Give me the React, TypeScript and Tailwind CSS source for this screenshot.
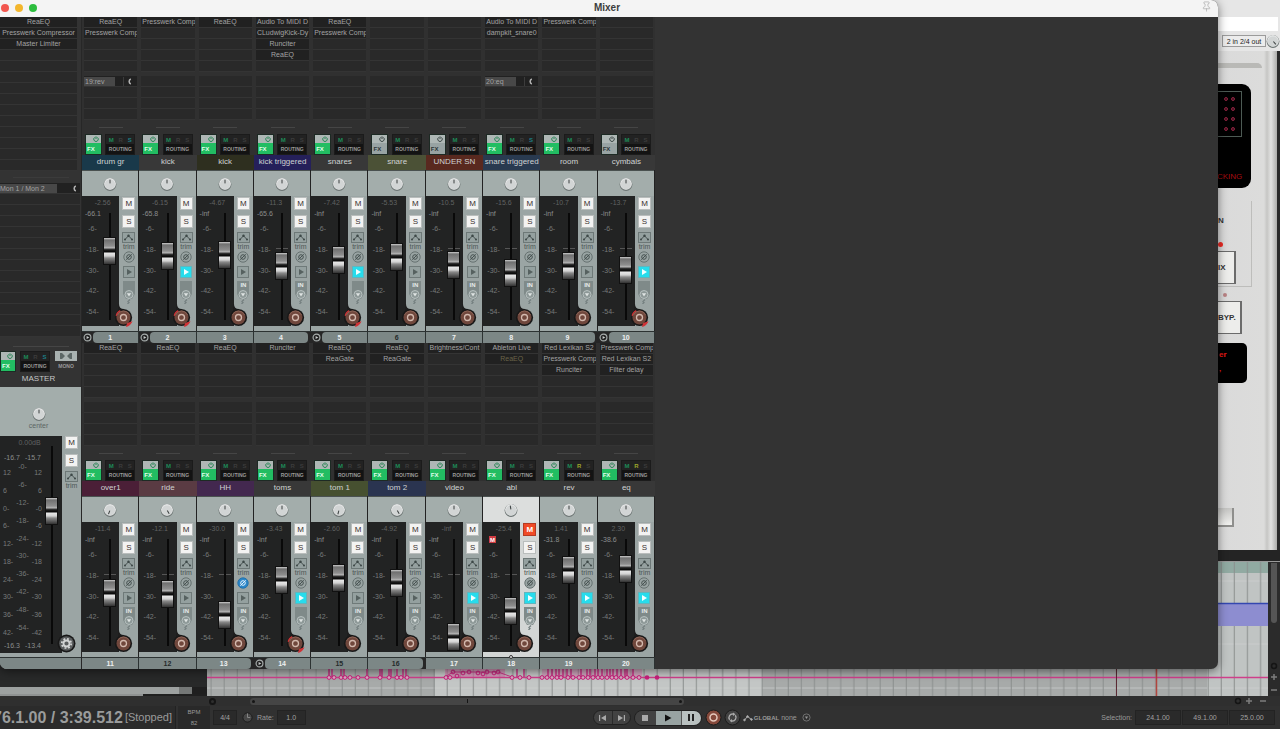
import React from "react";
import { Pin } from "lucide-react";

type Track = {
  n: number;
  name: string;
  tint: string;
  fx: string[];
  send?: string;
  vol: string;
  peak: string;
  fader: number;
  pan?: number;
  fxOff?: boolean;
  play?: boolean;
  armed?: boolean;
  phase?: boolean;
  soloLit?: boolean;
  recvLit?: boolean;
  folder?: boolean;
  folderEnd?: boolean;
  darkNum?: boolean;
  selected?: boolean;
};

const plain = "bg-[#383838]";

const topTracks: Track[] = [
  { n: 1, name: "drum gr", tint: "bg-[#19394a]", fx: ["ReaEQ", "Presswerk Comp"], send: "19:rev", vol: "-2.56", peak: "-66.1", fader: 61, armed: true, soloLit: true, folder: true },
  { n: 2, name: "kick", tint: plain, fx: ["Presswerk Comp"], vol: "-6.15", peak: "-65.8", fader: 56, play: true, armed: true, folder: true },
  { n: 3, name: "kick", tint: "bg-[#2e2f1f]", fx: ["ReaEQ"], vol: "-4.67", peak: "-inf", fader: 57 },
  { n: 4, name: "kick triggered", tint: "bg-[#25205a]", fx: ["Audio To MIDI D", "CLudwigKick-Dy", "Runciter", "ReaEQ"], vol: "-11.3", peak: "-65.6", fader: 46, folderEnd: true },
  { n: 5, name: "snares", tint: plain, fx: ["ReaEQ", "Presswerk Comp"], vol: "-7.42", peak: "-inf", fader: 52, play: true, armed: true, folder: true },
  { n: 6, name: "snare", tint: "bg-[#4b5136]", fx: [], vol: "-5.53", peak: "-inf", fader: 55, fxOff: true, darkNum: true },
  { n: 7, name: "UNDER SN", tint: "bg-[#59291f]", fx: [], vol: "-10.5", peak: "-inf", fader: 47, fxOff: true },
  { n: 8, name: "snare triggered", tint: "bg-[#293a50]", fx: ["Audio To MIDI D", "dampkit_snare0"], send: "20:eq", vol: "-15.6", peak: "-inf", fader: 39, soloLit: true },
  { n: 9, name: "room", tint: plain, fx: ["Presswerk Comp"], vol: "-10.7", peak: "-inf", fader: 46, folderEnd: true },
  { n: 10, name: "cymbals", tint: plain, fx: [], vol: "-13.7", peak: "-inf", fader: 42, fxOff: true, play: true, armed: true, folder: true },
];

const bottomTracks: Track[] = [
  { n: 11, name: "over1", tint: "bg-[#4b1f37]", fx: ["ReaEQ"], vol: "-11.4", peak: "-inf", fader: 45, pan: -160 },
  { n: 12, name: "ride", tint: "bg-[#5a3b43]", fx: ["ReaEQ"], vol: "-12.1", peak: "-inf", fader: 44, pan: 150, darkNum: true },
  { n: 13, name: "HH", tint: "bg-[#43284f]", fx: ["ReaEQ"], vol: "-30.0", peak: "-inf", fader: 23, phase: true, folderEnd: true },
  { n: 14, name: "toms", tint: plain, fx: ["Runciter"], vol: "-3.43", peak: "-inf", fader: 58, play: true, armed: true, folder: true },
  { n: 15, name: "tom 1", tint: "bg-[#465030]", fx: ["ReaEQ", "ReaGate"], vol: "-2.60", peak: "-inf", fader: 60, pan: -165, darkNum: true },
  { n: 16, name: "tom 2", tint: "bg-[#2a3450]", fx: ["ReaEQ", "ReaGate"], vol: "-4.92", peak: "-inf", fader: 55, pan: 150, darkNum: true, folderEnd: true },
  { n: 17, name: "video", tint: plain, fx: ["Brightness/Cont"], vol: "-inf", peak: "-inf", fader: 1, play: true },
  { n: 18, name: "abl", tint: plain, fx: ["Ableton Live", "ReaEQ"], vol: "-25.4", peak: "M", fader: 27, pan: -10, play: true, selected: true },
  { n: 19, name: "rev", tint: plain, fx: ["Red Lexikan S2", "Presswerk Comp", "Runciter"], vol: "1.41", peak: "-31.8", fader: 68, play: true, recvLit: true },
  { n: 20, name: "eq", tint: plain, fx: ["Presswerk Comp", "Red Lexikan S2", "Filter delay"], vol: "2.30", peak: "-38.6", fader: 69, play: true, recvLit: true },
];

function Knob({ angle = 0, label }: { angle?: number; label: string }) {
  return (
    <button aria-label={label} className="size-[14px] shrink-0">
      <svg viewBox="0 0 14 14" className="size-full">
        <circle cx="7" cy="7.5" r="6.4" fill="#6d7574" />
        <circle cx="7" cy="6.8" r="5.9" fill="#e4e6e6" />
        <circle cx="7" cy="7.4" r="5" fill="#d2d5d5" />
        <path d="M7 2.6V6.4" stroke="#3a3f3f" strokeWidth="1" transform={`rotate(${angle} 7 7)`} />
      </svg>
    </button>
  );
}

function Slot({ text, bypassed }: { text?: string; bypassed?: boolean }) {
  return (
    <div
      className={`flex h-[11px] items-center overflow-hidden whitespace-nowrap border-b border-[#343434] px-px text-[7px] leading-[10px] ${
        text ? "bg-[#212121]" : "bg-[#292929]"
      } ${bypassed ? "text-[#6a6349]" : "text-[#a3a3a3]"}`}
    >
      <span className="mx-auto">{text}</span>
    </div>
  );
}

function SendSlot({ text }: { text: string }) {
  return (
    <div className="flex h-[11px] items-center border-b border-[#343434] bg-[#212121] text-[7px] leading-[9px] text-[#a3a3a3]">
      <span className="h-[9px] w-[58%] whitespace-nowrap bg-[#484848] px-px">{text}</span>
      <span className="ml-2 h-[9px] w-px bg-[#3c3c3c]" />
      <svg viewBox="0 0 8 8" className="ml-auto mr-1 size-[7px]">
        <path d="M5.5 1.2A3 3 0 0 0 5.5 6.8" fill="none" stroke="#b4b4b4" strokeWidth="1.7" />
      </svg>
    </div>
  );
}

function FxButton({ off, clipped }: { off?: boolean; clipped?: boolean }) {
  return (
    <button className={`flex h-[21px] flex-col border border-[#1d2a24] ${clipped ? "w-4" : "w-[17px]"}`} aria-label="FX chain">
      <span className="flex h-2 w-full items-center justify-end bg-[#aeb7b5] pr-[2px]">
        <svg viewBox="0 0 8 8" className="size-[6px]" fill="none" stroke={off ? "#2f3b3a" : "#19804b"} strokeWidth="1.2">
          <path d="M2.3 1.8A3 3 0 1 0 5.7 1.8M4 .5V4" />
        </svg>
      </span>
      <span
        className={`flex w-full flex-1 items-center pl-px text-[6px] font-bold leading-none ${
          off ? "bg-[#98a3a3] text-[#2c3535]" : "bg-[#22bd62] text-[#e2ffee]"
        }`}
      >
        FX
      </span>
    </button>
  );
}

function RoutingButton({ soloLit, recvLit }: { soloLit?: boolean; recvLit?: boolean }) {
  return (
    <button className="flex h-[21px] w-[30px] flex-col border border-[#1b1b1b] bg-[#131313]">
      <span className="flex h-[9px] w-full items-center justify-around bg-[#222] text-[6px] font-bold leading-none">
        <span className="text-[#1d8a58]">M</span>
        <span className={recvLit ? "text-[#9ca62a]" : "text-[#3c3c3c]"}>R</span>
        <span className={soloLit ? "text-[#1d7f86]" : "text-[#3c3c3c]"}>S</span>
      </span>
      <span className="flex w-full flex-1 items-center justify-center text-[5px] font-bold leading-none text-[#9a9a9a]">ROUTING</span>
    </button>
  );
}

function Fader({ value, max, label, h }: { value: number; max: number; label: string; h: string }) {
  return (
    <input
      type="range"
      aria-label={label}
      min={0}
      max={max}
      defaultValue={value}
      className={`${h} w-[13px] appearance-none bg-[linear-gradient(90deg,transparent_6px,#090909_6px,#090909_8px,transparent_8px)] bg-no-repeat [direction:rtl] [writing-mode:vertical-lr] [&::-webkit-slider-thumb]:h-[28px] [&::-webkit-slider-thumb]:w-[13px] [&::-webkit-slider-thumb]:appearance-none [&::-webkit-slider-thumb]:border [&::-webkit-slider-thumb]:border-[#111] [&::-webkit-slider-thumb]:bg-[linear-gradient(180deg,#d0d0d0_0px,#707070_2px,#8e8e8e_8px,#b8b8b8_10px,#3a3a3a_11px,#0b0b0b_13px,#0b0b0b_14px,#e8e8e8_15px,#d2d2d2_18px,#8a8a8a_20px,#333_26px)]`}
    />
  );
}

function MiniButton({ children, lit }: { children: React.ReactNode; lit?: boolean }) {
  return (
    <button
      className={`flex size-[13px] shrink-0 items-center justify-center border text-[8px] leading-none ${
        lit ? "border-[#b53a22] bg-[#f04a26] font-bold text-white" : "border-[#b9bdbc] bg-[#f3f3f2] text-[#3a3030]"
      }`}
    >
      {children}
    </button>
  );
}

function EnvelopeButton() {
  return (
    <>
      <button aria-label="Envelopes" className="mt-1 h-[11px] w-[13px] shrink-0 border border-[#6d7877] bg-[#94a09f]">
        <svg viewBox="0 0 11 9" className="size-full" stroke="#3c4746" fill="#3c4746">
          <path d="M2 6.5 5.5 2.8 9 6.5" fill="none" strokeWidth=".9" />
          <circle cx="2" cy="6.5" r="1" stroke="none" />
          <circle cx="5.5" cy="2.8" r="1.2" stroke="none" />
          <circle cx="9" cy="6.5" r="1" stroke="none" />
        </svg>
      </button>
      <span className="h-2 text-[7px] leading-[7px] text-[#4c5756]">trim</span>
    </>
  );
}

function RecordButton({ armed }: { armed?: boolean }) {
  return (
    <button aria-label="Record arm" className="relative -ml-[5px] h-[23px] w-[20px] shrink-0 self-start">
      <svg viewBox="0 0 20 23" className="size-full">
        <path d="M4 0H5Q5 5 10 5L4 14Z" fill="#1e1e1e" />
        <circle cx="9.500" cy="13.500" r="8.600" fill="#181818" />
        {armed && <path d="M1.600 11.500A8 8 0 0 1 6 6L7 9 4 13ZM18.500 17.200A9.500 9.500 0 0 1 12 23L13 19Z" fill="#d03236" />}
        <circle cx="9.500" cy="13.500" r="7" fill="#70473c" />
        <path d="M3.500 11A6.500 6.500 0 0 1 15.500 11" fill="none" stroke="#8d6558" strokeWidth=".9" />
        <circle cx="9.500" cy="13.500" r="3" fill="none" stroke="#d3b9ae" strokeWidth="1.300" />
      </svg>
    </button>
  );
}

function NumberBar({ t }: { t: Track }) {
  return (
    <div className="flex h-3 border-t border-[#2c3232] bg-[#262626]">
      {t.folder && (
        <button aria-label="Collapse folder" className="flex w-[11px] shrink-0 items-center justify-center">
          <svg viewBox="0 0 10 10" className="size-[9px]">
            <circle cx="5" cy="5" r="3.800" fill="#222" stroke="#a7adac" strokeWidth="1.300" />
            <path d="M4 3.200 7 5 4 6.800Z" fill="#c9cdcc" />
          </svg>
        </button>
      )}
      <div
        className={`flex flex-1 items-center justify-center bg-[#7c8786] text-[7px] font-bold leading-none ${t.folder ? "rounded-l-[4px] pr-[11px]" : ""} ${
          t.folderEnd ? "mr-[3px] rounded-r-[4px]" : "border-r border-[#2c3232]"
        } ${t.darkNum ? "text-[#252b2b]" : "text-[#eef0f0]"}`}
      >
        {t.n}
      </div>
    </div>
  );
}

const marks = ["-6-", "-18-", "-30-", "-42-", "-54-"];

function Strip({ t }: { t: Track }) {
  return (
    <section className="flex min-w-0 flex-col">
      <div className="flex flex-col gap-1 border-r border-[#303030] pl-[2px] pr-px">
        <div>
          {[0, 1, 2, 3, 4].map((i) => (
            <Slot key={i} text={t.fx[i]} bypassed={t.n === 18 && i === 1} />
          ))}
        </div>
        <div>
          {t.send ? <SendSlot text={t.send} /> : <Slot />}
          <Slot />
          <Slot />
          <Slot />
        </div>
      </div>
      <div className="flex h-[14px] items-center justify-center">
        <span className="h-px w-6 bg-[#454545]" />
      </div>
      <div className="flex h-[21px] justify-between pl-[3px] pr-1">
        <FxButton off={t.fxOff} />
        <RoutingButton soloLit={t.soloLit} recvLit={t.recvLit} />
      </div>
      <h3 className={`h-[15px] overflow-hidden whitespace-nowrap text-center text-[8px] font-normal leading-[14px] text-[#cfd2d2] ${t.tint}`}>{t.name}</h3>
      <div className={`flex flex-col border-r border-[#222] ${t.selected ? "bg-[#d3d6d5]" : "bg-[#9ba5a4]"}`}>
        <div className={`flex h-[26px] items-center justify-center border-t border-[#4a5150] ${t.selected ? "bg-[#dcdedd]" : "bg-[#a3adab]"}`}>
          <Knob angle={t.pan} label={`${t.name} pan`} />
        </div>
        <div className="flex h-[130px]">
          <div className="relative flex flex-1 flex-col bg-[#222323] pl-1 text-[7px] leading-none text-[#777a7a]">
            <span className="mt-[3px] h-[11px] text-center text-[#606262]">{t.vol}</span>
            {t.peak === "M" ? (
              <span className="ml-[2px] flex size-[7px] items-center justify-center bg-[#cf3b42] text-[6px] font-bold text-white">M</span>
            ) : (
              <span className="-ml-px h-[7px] text-[#8a8d8d]">{t.peak}</span>
            )}
            <div className="mb-[11px] mt-[8px] flex flex-1 flex-col justify-between">
              {marks.map((m) => (
                <span key={m} className="w-[13px] text-center">
                  {m}
                </span>
              ))}
            </div>
            <span className="absolute right-[3px] top-[52px] h-px w-3 bg-[#565656]" />
            <div className="absolute bottom-0 right-[3px] flex">
              <Fader value={t.fader} max={98} label={`${t.name} volume`} h="h-[126px] bg-[length:13px_107px] bg-[position:0_13px]" />
            </div>
          </div>
          <div className="flex w-[19px] shrink-0 flex-col items-center pt-px">
            <MiniButton lit={t.selected}>M</MiniButton>
            <div className="mt-[5px]">
              <MiniButton>S</MiniButton>
            </div>
            <EnvelopeButton />
            <button aria-label="Phase" className="mt-px size-3 shrink-0">
              <svg viewBox="0 0 12 12" className="size-full" fill="none">
                <circle cx="6" cy="6" r="5.200" fill={t.phase ? "#2b86c8" : "#99a4a3"} stroke={t.phase ? "#1f6ea8" : "#616c6b"} strokeWidth=".9" />
                <circle cx="6" cy="6" r="2.300" stroke={t.phase ? "#e5f4ff" : "#465150"} strokeWidth="1" />
                <path d="M3.300 8.700 8.700 3.300" stroke={t.phase ? "#e5f4ff" : "#465150"} strokeWidth="1" />
              </svg>
            </button>
            <button aria-label="Monitor" className={`mt-[3px] size-3 shrink-0 border ${t.play ? "border-[#5fb6bd] bg-[#27dcec]" : "border-[#6f7a79] bg-[#94a09f]"}`}>
              <svg viewBox="0 0 10 10" className="size-full">
                <path d="M3 2 8 5 3 8Z" fill={t.play ? "#f2ffff" : "#566160"} />
              </svg>
            </button>
            <button aria-label="Input" className="mt-[3px] flex h-[23px] w-3 shrink-0 flex-col items-center">
              <span className="h-[9px] w-full shrink-0 bg-[#7f8a89] text-center text-[6px] font-bold leading-[9px] text-[#e6eae9]">{t.armed ? "" : "IN"}</span>
              <svg viewBox="0 0 12 14" className="h-[14px] w-3">
                <path d="M0 0H12V4L9 9H3L0 4Z" fill="#7f8a89" />
                <circle cx="6" cy="4.500" r="4" fill="#8d9897" stroke="#b7c0bf" />
                <path d="M3.800 3.200H8.200L6 6.600Z" fill="#dfe4e3" />
                <path d="M7 9.500 5 11.500 6 12.500 4.500 14" stroke="#758080" fill="none" strokeWidth="1.300" />
              </svg>
            </button>
            <RecordButton armed={t.armed} />
          </div>
        </div>
        <div className="flex h-[5px] items-end justify-center">
          {t.selected && <span className="relative top-[2px] size-1 shrink-0 rounded-full border border-[#333] bg-[#e8e8e8]" />}
        </div>
      </div>
      <NumberBar t={t} />
    </section>
  );
}

const sideMarks = ["12", "6", "0", "6", "12", "18", "24", "30", "36", "42"];
const midMarks = ["-0-", "-6-", "-12-", "-18-", "-24-", "-30-", "-36-", "-42-", "-48-", "-54-"];

function Master() {
  return (
    <section className="flex w-[82px] shrink-0 flex-col border-r border-[#272727]">
      <div className="pr-1">
        {Array.from({ length: 14 }, (_, i) => (
          <Slot key={i} text={["ReaEQ", "Presswerk Compressor", "Master Limiter"][i]} />
        ))}
      </div>
      <div className="flex h-3 items-center justify-center">
        <span className="h-px w-14 bg-[#3b3b3b]" />
      </div>
      <div className="pr-px">
        <div className="flex h-[11px] items-center border-b border-[#343434] bg-[#212121] text-[7px] leading-[9px] text-[#a3a3a3]">
          <span className="h-[9px] w-[57px] whitespace-nowrap bg-[#484848]">Mon 1 / Mon 2</span>
          <svg viewBox="0 0 8 8" className="ml-auto mr-[2px] size-[7px]">
            <path d="M5.500 1.200A3 3 0 0 0 5.500 6.800" fill="none" stroke="#b4b4b4" strokeWidth="1.700" />
          </svg>
        </div>
        {Array.from({ length: 13 }, (_, i) => (
          <Slot key={i} />
        ))}
      </div>
      <div className="flex h-[14px] items-end justify-center pb-1">
        <span className="h-px w-14 bg-[#454545]" />
      </div>
      <div className="flex h-[21px] gap-1">
        <FxButton clipped />
        <RoutingButton soloLit />
        <button className="flex w-6 flex-col items-center">
          <span className="flex h-[10px] w-[22px] items-center justify-center bg-[#a9b2b1]">
            <svg viewBox="0 0 12 6" className="h-[6px] w-3" fill="#5c6766">
              <path d="M0 0H2L5 3 2 6H0ZM12 0H10L7 3 10 6H12Z" />
            </svg>
          </span>
          <span className="flex flex-1 items-center text-[5px] font-bold leading-none text-[#9a9a9a]">MONO</span>
        </button>
      </div>
      <h3 className="h-[15px] pr-1 text-center text-[8px] font-normal leading-[13px] text-[#c4c6c6]">MASTER</h3>
      <div className="flex flex-1 flex-col bg-[#9ba5a4]">
        <div className="flex h-[49px] flex-col items-center justify-end bg-[#a3adab] pb-[6px] pr-1">
          <Knob label="Master pan" />
          <span className="mt-px h-2 text-[7px] leading-none text-[#5b6665]">center</span>
        </div>
        <div className="flex flex-1">
          <div className="flex flex-1 bg-[#222323] text-[7px] leading-none text-[#777a7a]">
            <div className="flex w-[45px] shrink-0 flex-col">
              <span className="mt-[3px] pl-[14px] text-center text-[#606262]">0.00dB</span>
              <span className="mt-2 flex justify-between pl-1 text-[#8a8d8d]">
                <span>-16.7</span>
                <span className="pr-1">-15.7</span>
              </span>
              <div className="flex h-[175px] justify-between pl-[3px]">
                <div className="flex flex-col justify-between pt-2">
                  {sideMarks.map((m, i) => (
                    <span key={i}>{i < 2 ? m : `${m}-`}</span>
                  ))}
                </div>
                <div className="flex flex-col justify-between pb-[5px] pt-[2px] text-center">
                  {midMarks.map((m) => (
                    <span key={m}>{m}</span>
                  ))}
                </div>
                <div className="flex flex-col justify-between pr-[3px] pt-2 text-right">
                  {sideMarks.map((m, i) => (
                    <span key={i}>{i < 2 ? m : `-${m}`}</span>
                  ))}
                </div>
              </div>
              <span className="mt-[6px] flex justify-between pl-1 text-[#8a8d8d]">
                <span>-16.3</span>
                <span className="pr-1">-13.4</span>
              </span>
            </div>
            <div className="flex pt-[10px]">
              <Fader value={119} max={170} label="Master volume" h="h-[198px]" />
            </div>
          </div>
          <div className="flex w-[19px] shrink-0 flex-col items-center">
            <MiniButton>M</MiniButton>
            <div className="mt-[5px]">
              <MiniButton>S</MiniButton>
            </div>
            <EnvelopeButton />
            <button aria-label="Master settings" className="-ml-[5px] mt-auto size-[19px] shrink-0 self-start">
              <svg viewBox="0 0 19 19" className="size-full">
                <circle cx="9.500" cy="9.500" r="9" fill="#181818" />
                <circle cx="9.500" cy="9.500" r="7.300" fill="#5a5d5e" />
                <circle cx="9.500" cy="9.500" r="3" fill="none" stroke="#d2d4d4" strokeWidth="1.800" />
                <circle cx="9.500" cy="9.500" r="4.700" fill="none" stroke="#d2d4d4" strokeWidth="1.800" strokeDasharray="1.850 1.840" />
              </svg>
            </button>
          </div>
        </div>
        <div className="h-1" />
        <div className="h-3 border-t border-[#2c3232] bg-[#7c8786]" />
      </div>
    </section>
  );
}

function MixerWindow() {
  return (
    <main className="absolute left-0 right-[62px] top-0 overflow-hidden rounded-b-[7px] rounded-tr-[7px] bg-[#333] shadow-[0_2px_10px_rgba(0,0,0,0.5)]">
      <header className="flex h-[17px] items-center bg-[#f4f4f4] px-px">
        <div className="flex w-12 gap-[6px] pb-[2px]">
          <button aria-label="Close" className="size-2 rounded-full bg-[#f2574f]" />
          <button aria-label="Minimize" className="size-2 rounded-full bg-[#f3b62d]" />
          <button aria-label="Zoom" className="size-2 rounded-full bg-[#2dbd3e]" />
        </div>
        <h1 className="flex-1 pb-[2px] pr-1 text-center text-[10px] font-bold leading-none text-[#3d3d3d]">Mixer</h1>
        <button aria-label="Pin window" className="mb-1 flex w-12 justify-end pr-[5px]">
          <Pin size={11} strokeWidth={1.5} color="#a8a8a8" />
        </button>
      </header>
      <div className="flex">
        <Master />
        <div className="grid w-[573px] grid-cols-10 bg-[#303030]">
          {topTracks.map((t) => (
            <Strip key={t.n} t={t} />
          ))}
          {bottomTracks.map((t) => (
            <Strip key={t.n} t={t} />
          ))}
        </div>
      </div>
    </main>
  );
}

function PluginPanel() {
  return (
    <aside className="ml-auto flex h-[550px] w-[78px] flex-col bg-[#e6e6e6] pl-4">
      <div className="mt-[17px] h-[14px] w-[60px] bg-white" />
      <div className="flex h-5 items-center justify-between overflow-hidden pl-1">
        <button className="h-3 w-11 shrink-0 whitespace-nowrap border border-[#9b9b9b] bg-[#ececec] text-[7px] leading-none text-[#222]">2 in 2/4 out</button>
        <Knob angle={140} label="Wet" />
      </div>
      <div className="flex flex-1 flex-col items-start border-r-[3px] border-[#2a2a2a] bg-[linear-gradient(90deg,#dadada_0,#dcdcdb_46px,#c6c6c4_49px,#e2e2e1_53px,#adadab_59px)]">
        <div className="mt-3 h-[5px] w-11 rounded-tr-[6px] bg-[#b9b9b6]" />
        <div className="mt-4 flex h-[104px] w-[33px] flex-col justify-between rounded-r-[9px] bg-black py-[7px]">
          <div className="grid h-[46px] w-6 grid-cols-2 place-items-center border-y border-r border-[#4d5a54] px-1 py-[2px]">
            {Array.from({ length: 8 }, (_, i) => (
              <span key={i} className="size-1 rounded-full border border-[#8c2340] bg-[#3a0d1a]" />
            ))}
          </div>
          <span className="-ml-px text-[8px] leading-none text-[#a80c10]">CKING</span>
        </div>
        <div className="mt-[13px] flex h-[86px] w-[34px] flex-col border-b border-r border-[#bdbdbb]">
          <span className="mt-4 text-[8px] font-bold leading-none text-[#333]">N</span>
          <span className="mt-[17px] size-[5px] rounded-full bg-[#ee2b25]" />
          <button className="mt-1 h-[33px] w-[18px] shrink-0 border-y border-r-2 border-[#6b6b6b] bg-[#ededeb] text-left text-[8px] font-bold text-[#333]">IX</button>
        </div>
        <span className="ml-[5px] mt-[6px] size-1 rounded-full bg-[#b98284]" />
        <button className="mt-1 h-[33px] w-6 border-y border-r-2 border-[#6b6b6b] bg-[#ededeb] text-left text-[8px] font-bold text-[#333]">BYP.</button>
        <div className="mt-[9px] flex h-10 w-[29px] flex-col gap-[6px] rounded-r-[5px] bg-black pl-px pt-2 text-[8px] font-bold leading-none text-[#ec1a16]">
          <span>er</span>
          <span>,</span>
        </div>
        <button aria-label="Switch" className="mb-[23px] mt-auto h-[19px] w-4 border-b-2 border-r-2 border-[#8f8f8d] bg-[linear-gradient(180deg,#c4c4c2,#f1f1ef)]" />
      </div>
    </aside>
  );
}

const spikes = [122, 125, 134, 137, 160, 173, 175, 182, 184, 190, 196, 199, 310, 317, 341, 345, 349, 352, 356, 360, 364, 374, 380, 383, 388, 391, 395, 400, 403, 406, 410, 414, 418, 420, 426];
const nodes = [122, 127, 134, 138, 143, 151, 160, 173, 182, 190, 194, 200, 239, 243, 305, 313, 322, 335, 340, 345, 350, 354, 361, 366, 372, 376, 381, 386, 391, 395, 400, 405, 409, 414, 420, 426, 432];
const upperNodes = [[246, 110], [250, 114], [256, 111], [262, 110], [271, 111], [276, 112], [280, 110], [287, 111], [291, 110]];

function Arrangement() {
  return (
    <div className="flex flex-1">
      <div className="flex w-[207px] shrink-0 flex-col justify-end bg-[#282929]">
        <div className="flex h-[7px] bg-[#1f1f1f]">
          <div className="h-full w-[179px] bg-[#9da1a0]" />
          <div className="h-full w-[13px] bg-[#757877]" />
        </div>
        <div className="flex h-[2px] bg-[#8f9292]">
          <span className="ml-[143px] h-[2px] flex-1 bg-[#202020]" />
        </div>
      </div>
      <div className="min-w-0 flex-1 bg-[#a7aaa9]">
        <svg className="block h-[134px] w-full" aria-hidden="true">
          <defs>
            <pattern id="grid" width="13.120" height="134" patternUnits="userSpaceOnUse">
              <path d="M4 0V134" stroke="#8b8e8d" strokeWidth="1" />
            </pattern>
          </defs>
          <rect x="228" width="327" height="134" fill="#c3c6c5" />
          <rect x="1000" width="61" height="134" fill="#c0c4c3" />
          <rect x="1000" width="61" height="11" fill="#91aaa2" />
          <path d="M0 126H1061M1011 19H1061M1011 82H1061" stroke="#ced1d0" strokeWidth=".7" />
          <rect width="100%" height="134" fill="url(#grid)" />
          <rect x="1000" y="41" width="61" height="23" fill="#8d8dd0" />
          <path d="M1000 41.500H1061" stroke="#3447b0" strokeWidth="1.500" />
          <rect x="238" y="104" width="60" height="11" fill="#d978ac" opacity=".6" />
          <rect x="335" y="104" width="100" height="11" fill="#d978ac" opacity=".45" />
          <path d="M238 115L246 110H291L305 115" stroke="#c93684" fill="none" />
          <path d="M0 115.500H1061" stroke="#cf3f8a" strokeWidth="1.500" />
          {spikes.map((x) => (
            <path key={x} d={`M${x} 104V115`} stroke="#c81f7b" strokeWidth="1.300" />
          ))}
          {nodes.map((x) => (
            <circle key={x} cx={x} cy="115.500" r="1.900" fill="#d9a9c2" stroke="#c81f7b" />
          ))}
          {upperNodes.map(([x, y]) => (
            <circle key={x} cx={x} cy={y} r="1.900" fill="none" stroke="#c81f7b" />
          ))}
          <circle cx="440" cy="115.500" r="2.300" fill="#c81f7b" />
          <circle cx="450" cy="115.500" r="2.300" fill="#c81f7b" />
          <path d="M909.500 100V134" stroke="#5b2a34" />
          <path d="M949.500 100V134" stroke="#b0453e" strokeWidth="1.500" />
        </svg>
      </div>
      <div className="flex w-3 shrink-0 flex-col items-center bg-[#2b2b2b] text-[#7d7d7d]">
        <span className="mt-px h-[60px] w-[6px] rounded-b-[3px] bg-[#555]" />
        <svg viewBox="0 0 10 34" className="mt-auto h-[34px] w-[10px]" stroke="currentColor" fill="none" strokeWidth="1.500">
          <circle cx="5" cy="4" r="2.500" stroke="#151515" />
          <path d="M5 12V18M2 15H8M2 28H8" />
        </svg>
      </div>
    </div>
  );
}

function ScrollRow() {
  return (
    <div className="flex h-[10px] items-center bg-[#2f2f2f] pr-3">
      <span className="ml-[209px] size-[7px] rounded-full border-2 border-[#151515]" />
      <div className="ml-[34px] flex h-[7px] w-[434px] items-center justify-between rounded-full bg-[#454545] px-[2px]">
        <span className="size-[3px] rounded-full bg-[#151515]" />
        <span className="h-1 w-px bg-[#151515]" />
        <span className="size-[3px] rounded-full bg-[#151515]" />
      </div>
      <svg viewBox="0 0 34 8" className="ml-auto h-2 w-[34px]" stroke="#7d7d7d" fill="none" strokeWidth="1.500">
        <circle cx="4" cy="4" r="2.500" stroke="#151515" />
        <path d="M12 4H18M15 1V7M26 4H32" />
      </svg>
    </div>
  );
}

function Field({ children, w }: { children: string; w: string }) {
  return (
    <input
      aria-label="Transport value"
      defaultValue={children}
      className={`h-[15px] ${w} border border-[#232323] bg-[#2a2a2a] text-center text-[7px] leading-none text-[#a2a2a2]`}
    />
  );
}

function Transport() {
  return (
    <footer className="flex h-[23px] items-center bg-[#313131] text-[#9a9a9a]">
      <div className="flex h-full w-[46%] shrink-0 items-center">
        <div className="flex h-full w-[176px] items-center overflow-hidden whitespace-nowrap border-r border-[#222] bg-[#2b2b2b]">
          <span className="-ml-[7px] text-[16px] font-bold leading-none text-[#9a9c9c]">76.1.00 / 3:39.512</span>
          <span className="ml-[2px] text-[11px] leading-none">[Stopped]</span>
        </div>
        <div className="ml-[2px] flex h-full w-8 flex-col items-center justify-around bg-[#292929] text-[6px] leading-none">
          <span>BPM</span>
          <span>82</span>
        </div>
        <div className="ml-[3px] flex">
          <Field w="w-6">4/4</Field>
        </div>
        <svg viewBox="0 0 12 12" className="ml-[5px] size-[11px]">
          <circle cx="6" cy="6" r="5" fill="#474747" stroke="#1b1b1b" />
          <path d="M6 1.500V6H9" stroke="#8b8b8b" fill="none" />
        </svg>
        <label className="ml-1 flex items-center gap-[3px] text-[7px] leading-none">
          Rate:
          <Field w="w-[29px]">1.0</Field>
        </label>
      </div>
      <div className="flex items-center gap-[2px] pl-1">
        <div className="flex h-[15px] overflow-hidden rounded-full border border-[#202020] bg-[#424242]">
          <button aria-label="Go to start" className="flex w-[18px] items-center justify-center">
            <svg viewBox="0 0 8 8" className="size-2" fill="#a9a9a9"><path d="M0 1H1.200V7H0ZM7 1V7L2 4Z" /></svg>
          </button>
          <button aria-label="Go to end" className="flex w-[18px] items-center justify-center border-l border-[#2a2a2a]">
            <svg viewBox="0 0 8 8" className="size-2" fill="#a9a9a9"><path d="M1 1V7L6 4ZM6.800 1H8V7H6.800Z" /></svg>
          </button>
        </div>
        <div className="ml-px flex h-[16px] overflow-hidden rounded-full border border-[#202020]">
          <button aria-label="Stop" className="flex w-[21px] items-center justify-center bg-[#424242]">
            <span className="size-[6px] bg-[#a9a9a9]" />
          </button>
          <button aria-label="Play" className="flex w-[25px] items-center justify-center bg-[#98a3a2]">
            <svg viewBox="0 0 8 8" className="size-2"><path d="M1 .5 7.500 4 1 7.500Z" fill="#111" /></svg>
          </button>
          <button aria-label="Pause" className="flex w-5 items-center justify-center gap-[2px] border-l border-[#555] bg-[#b9c1c0]">
            <span className="h-[7px] w-[2px] bg-[#222]" />
            <span className="h-[7px] w-[2px] bg-[#222]" />
          </button>
        </div>
        <button aria-label="Record" className="ml-px size-[17px]">
          <svg viewBox="0 0 17 17" className="size-full">
            <circle cx="8.500" cy="8.500" r="7.500" fill="#85493b" stroke="#1c1c1c" />
            <circle cx="8.500" cy="8.500" r="3.500" fill="none" stroke="#e6c9bd" strokeWidth="1.500" />
          </svg>
        </button>
        <button aria-label="Repeat" className="size-[17px]">
          <svg viewBox="0 0 17 17" className="size-full" fill="none">
            <circle cx="8.500" cy="8.500" r="7.500" fill="#424242" stroke="#1c1c1c" />
            <path d="M5.700 10.700A3.500 3.500 0 0 1 9.500 5.200M11.300 6.300A3.500 3.500 0 0 1 7.500 11.800" stroke="#aaa" strokeWidth="1.400" />
            <path d="M9 3.400 11.500 5.200 9 7ZM8 10 5.500 11.800 8 13.600Z" fill="#aaa" />
          </svg>
        </button>
        <button className="flex items-center gap-px text-[6px] font-bold leading-none">
          <svg viewBox="0 0 10 8" className="h-2 w-[10px]" fill="#b0b0b0" stroke="#b0b0b0">
            <path d="M1.500 6 4.500 2.500 8.500 5.500" fill="none" />
            <circle cx="1.500" cy="6" r=".8" /><circle cx="4.500" cy="2.500" r=".8" /><circle cx="8.500" cy="5.500" r=".8" />
          </svg>
          GLOBAL
        </button>
        <button className="flex items-center gap-[5px] text-[7px] leading-none">
          none
          <svg viewBox="0 0 10 10" className="size-[9px]" fill="none">
            <circle cx="5" cy="5" r="4" stroke="#777" />
            <path d="M3.300 4H6.700L5 6.700Z" fill="#999" />
          </svg>
        </button>
      </div>
      <div className="ml-auto flex items-center gap-px pr-[5px] text-[7px] leading-none">
        <span className="mr-[2px]">Selection:</span>
        <Field w="w-[46px]">24.1.00</Field>
        <Field w="w-[46px]">49.1.00</Field>
        <Field w="w-[46px]">25.0.00</Field>
      </div>
    </footer>
  );
}

export default function App() {
  return (
    <div className="relative flex min-h-screen flex-col overflow-hidden bg-[#2a2a2a] font-['Liberation_Sans',Arial,sans-serif]">
      <PluginPanel />
      <div className="h-3 border-b border-[#9a9a9a] bg-[#242424]" />
      <Arrangement />
      <ScrollRow />
      <Transport />
      <MixerWindow />
    </div>
  );
}
